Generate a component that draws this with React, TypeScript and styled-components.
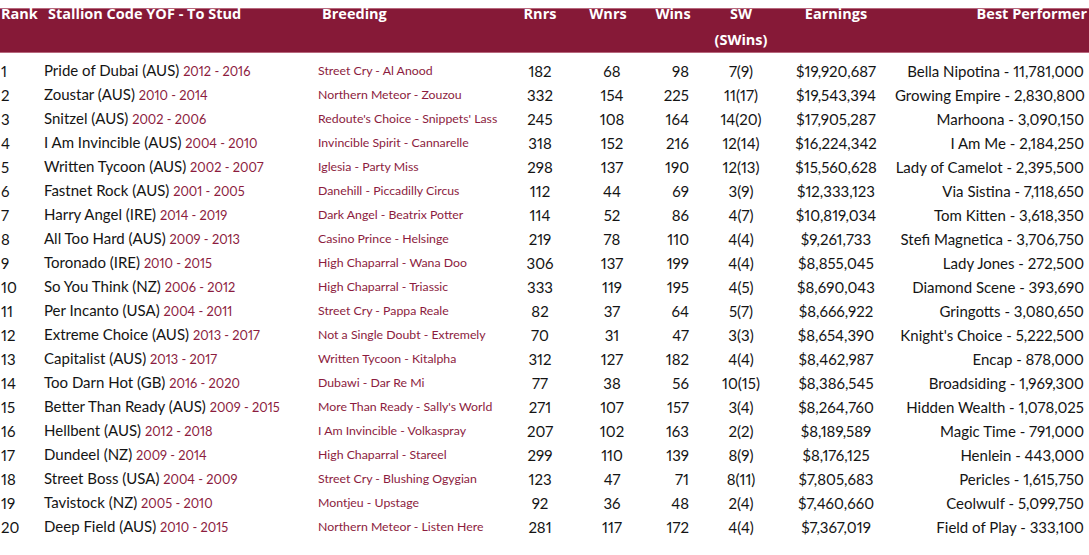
import React from 'react'
import styled, { createGlobalStyle } from 'styled-components'

const GlobalStyle = createGlobalStyle`
  html, body {
    margin: 0;
    padding: 0;
    background: #ffffff;
  }
  body {
    font-family: 'Lato', 'Liberation Sans', sans-serif;
    color: #141414;
  }
`

type Align = 'left' | 'center' | 'right'

const COLUMNS = '44px 274px 187px 70px 66px 64px 72px 118px 1fr'

const rows = [
  ['1', 'Pride of Dubai (AUS)', '2012 - 2016', 'Street Cry - Al Anood', '182', '68', '98', '7(9)', '$19,920,687', 'Bella Nipotina - 11,781,000'],
  ['2', 'Zoustar (AUS)', '2010 - 2014', 'Northern Meteor - Zouzou', '332', '154', '225', '11(17)', '$19,543,394', 'Growing Empire - 2,830,800'],
  ['3', 'Snitzel (AUS)', '2002 - 2006', "Redoute's Choice - Snippets' Lass", '245', '108', '164', '14(20)', '$17,905,287', 'Marhoona - 3,090,150'],
  ['4', 'I Am Invincible (AUS)', '2004 - 2010', 'Invincible Spirit - Cannarelle', '318', '152', '216', '12(14)', '$16,224,342', 'I Am Me - 2,184,250'],
  ['5', 'Written Tycoon (AUS)', '2002 - 2007', 'Iglesia - Party Miss', '298', '137', '190', '12(13)', '$15,560,628', 'Lady of Camelot - 2,395,500'],
  ['6', 'Fastnet Rock (AUS)', '2001 - 2005', 'Danehill - Piccadilly Circus', '112', '44', '69', '3(9)', '$12,333,123', 'Via Sistina - 7,118,650'],
  ['7', 'Harry Angel (IRE)', '2014 - 2019', 'Dark Angel - Beatrix Potter', '114', '52', '86', '4(7)', '$10,819,034', 'Tom Kitten - 3,618,350'],
  ['8', 'All Too Hard (AUS)', '2009 - 2013', 'Casino Prince - Helsinge', '219', '78', '110', '4(4)', '$9,261,733', 'Stefi Magnetica - 3,706,750'],
  ['9', 'Toronado (IRE)', '2010 - 2015', 'High Chaparral - Wana Doo', '306', '137', '199', '4(4)', '$8,855,045', 'Lady Jones - 272,500'],
  ['10', 'So You Think (NZ)', '2006 - 2012', 'High Chaparral - Triassic', '333', '119', '195', '4(5)', '$8,690,043', 'Diamond Scene - 393,690'],
  ['11', 'Per Incanto (USA)', '2004 - 2011', 'Street Cry - Pappa Reale', '82', '37', '64', '5(7)', '$8,666,922', 'Gringotts - 3,080,650'],
  ['12', 'Extreme Choice (AUS)', '2013 - 2017', 'Not a Single Doubt - Extremely', '70', '31', '47', '3(3)', '$8,654,390', "Knight's Choice - 5,222,500"],
  ['13', 'Capitalist (AUS)', '2013 - 2017', 'Written Tycoon - Kitalpha', '312', '127', '182', '4(4)', '$8,462,987', 'Encap - 878,000'],
  ['14', 'Too Darn Hot (GB)', '2016 - 2020', 'Dubawi - Dar Re Mi', '77', '38', '56', '10(15)', '$8,386,545', 'Broadsiding - 1,969,300'],
  ['15', 'Better Than Ready (AUS)', '2009 - 2015', "More Than Ready - Sally's World", '271', '107', '157', '3(4)', '$8,264,760', 'Hidden Wealth - 1,078,025'],
  ['16', 'Hellbent (AUS)', '2012 - 2018', 'I Am Invincible - Volkaspray', '207', '102', '163', '2(2)', '$8,189,589', 'Magic Time - 791,000'],
  ['17', 'Dundeel (NZ)', '2009 - 2014', 'High Chaparral - Stareel', '299', '110', '139', '8(9)', '$8,176,125', 'Henlein - 443,000'],
  ['18', 'Street Boss (USA)', '2004 - 2009', 'Street Cry - Blushing Ogygian', '123', '47', '71', '8(11)', '$7,805,683', 'Pericles - 1,615,750'],
  ['19', 'Tavistock (NZ)', '2005 - 2010', 'Montjeu - Upstage', '92', '36', '48', '2(4)', '$7,460,660', 'Ceolwulf - 5,099,750'],
  ['20', 'Deep Field (AUS)', '2010 - 2015', 'Northern Meteor - Listen Here', '281', '117', '172', '4(4)', '$7,367,019', 'Field of Play - 333,100'],
]

export default function App() {
  return (
    <>
      <GlobalStyle />
      <Page>
        <HeaderBand>
          <HeaderGrid>
            <HeadCell $align='left' $pad={1}>Rank</HeadCell>
            <HeadCell $align='left' $pad={4}>Stallion Code YOF - To Stud</HeadCell>
            <HeadCell $align='left' $pad={4}>Breeding</HeadCell>
            <HeadCell $align='center'>Rnrs</HeadCell>
            <HeadCell $align='center'>Wnrs</HeadCell>
            <HeadCell $align='center'>Wins</HeadCell>
            <HeadCell $align='center'>SW<br />(SWins)</HeadCell>
            <HeadCell $align='center'>Earnings</HeadCell>
            <HeadCell $align='right' $padRight={2}>Best Performer</HeadCell>
          </HeaderGrid>
        </HeaderBand>

        <Body>
          {rows.map(r => (
            <Row key={r[0]}>
              <Cell $align='left' $pad={1}>{r[0]}</Cell>
              <Cell $align='left'>
                {r[1]} <Years>{r[2]}</Years>
              </Cell>
              <Breeding>{r[3]}</Breeding>
              <Cell $align='center'>{r[4]}</Cell>
              <Cell $align='center' $pad={8}>{r[5]}</Cell>
              <Cell $align='right' $padRight={16}>{r[6]}</Cell>
              <Cell $align='center'>{r[7]}</Cell>
              <Cell $align='center'>{r[8]}</Cell>
              <Cell $align='right' $padRight={5}>{r[9]}</Cell>
            </Row>
          ))}
        </Body>
      </Page>
    </>
  )
}

const Page = styled.div`
  width: 1089px;
  padding-top: 8px;
`

const HeaderBand = styled.div`
  background: #861937;
  height: 45px;
  border-top: 1px solid #b7687d;
  border-bottom: 1px solid #b7687d;
  box-sizing: border-box;
`

const HeaderGrid = styled.div`
  display: grid;
  grid-template-columns: ${COLUMNS};
  margin-top: -8px;
`

const HeadCell = styled.div<{ $align: Align; $pad?: number; $padRight?: number }>`
  text-align: ${p => p.$align};
  padding-left: ${p => p.$pad ?? 0}px;
  padding-right: ${p => p.$padRight ?? 0}px;
  color: #ffffff;
  font-family: 'Open Sans', 'Lato', sans-serif;
  font-weight: 700;
  font-size: 14.5px;
  line-height: 26px;
  white-space: nowrap;
`

const Body = styled.div`
  padding-top: 5px;
`

const Row = styled.div`
  display: grid;
  grid-template-columns: ${COLUMNS};
  height: 24px;
  align-items: center;
`

const Cell = styled.div<{ $align: Align; $pad?: number; $padRight?: number }>`
  text-align: ${p => p.$align};
  padding-left: ${p => p.$pad ?? 0}px;
  padding-right: ${p => p.$padRight ?? 0}px;
  font-size: 15px;
  font-variant-numeric: proportional-nums;
  line-height: 24px;
  color: #141414;
  white-space: nowrap;
`

const Years = styled.span`
  font-size: 12.8px;
  color: #8c1c3e;
`

const Breeding = styled.div`
  font-size: 12.3px;
  line-height: 24px;
  color: #8c1c3e;
  white-space: nowrap;
`
